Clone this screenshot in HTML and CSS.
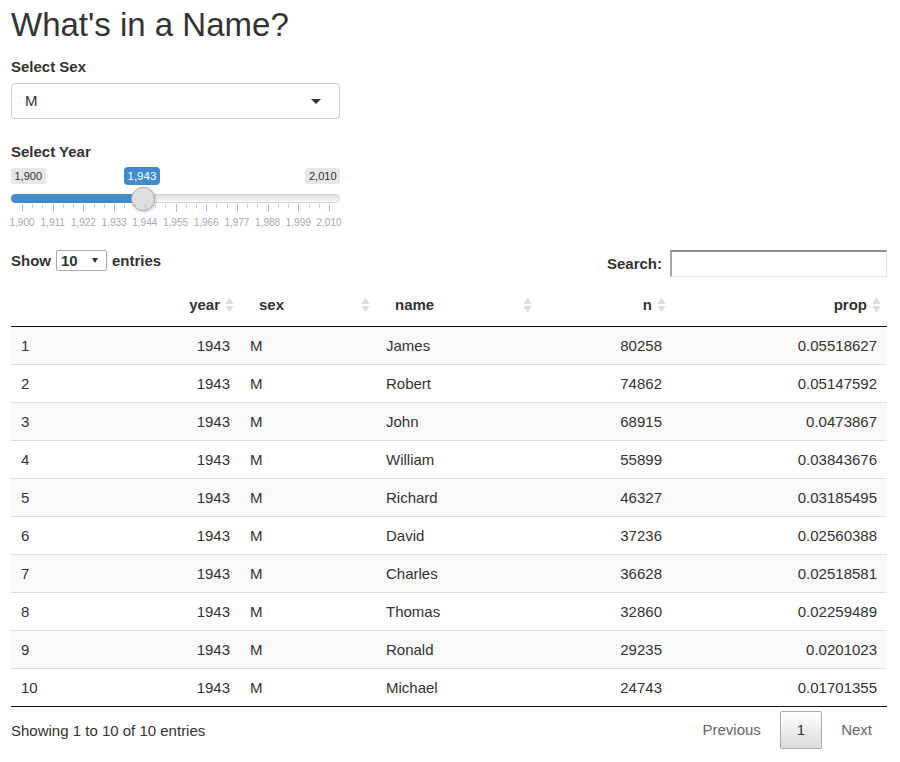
FILE: index.html
```html
<!DOCTYPE html>
<html>
<head>
<meta charset="utf-8">
<title>What's in a Name?</title>
<link rel="stylesheet" href="styles.css">
</head>
<body>
<div class="page">
  <h2 class="title">What's in a Name?</h2>

  <div class="field">
    <label class="ctl-label">Select Sex</label>
    <div class="select-box"><span class="select-value">M</span><span class="caret"></span></div>
  </div>

  <div class="field field-year">
    <label class="ctl-label label-year">Select Year</label>
    <div class="irs">
      <span class="irs-min">1,900</span>
      <span class="irs-max">2,010</span>
      <span class="irs-line"></span>
      <span class="irs-bar"></span>
      <span class="irs-from">1,943</span>
      <span class="irs-handle"></span>
      <div class="irs-grid">
        <span class="tick" style="left:0%"></span>
        <span class="tick small" style="left:3.333%"></span>
        <span class="tick small" style="left:6.667%"></span>
        <span class="tick" style="left:10%"></span>
        <span class="tick small" style="left:13.333%"></span>
        <span class="tick small" style="left:16.667%"></span>
        <span class="tick" style="left:20%"></span>
        <span class="tick small" style="left:23.333%"></span>
        <span class="tick small" style="left:26.667%"></span>
        <span class="tick" style="left:30%"></span>
        <span class="tick small" style="left:33.333%"></span>
        <span class="tick small" style="left:36.667%"></span>
        <span class="tick" style="left:40%"></span>
        <span class="tick small" style="left:43.333%"></span>
        <span class="tick small" style="left:46.667%"></span>
        <span class="tick" style="left:50%"></span>
        <span class="tick small" style="left:53.333%"></span>
        <span class="tick small" style="left:56.667%"></span>
        <span class="tick" style="left:60%"></span>
        <span class="tick small" style="left:63.333%"></span>
        <span class="tick small" style="left:66.667%"></span>
        <span class="tick" style="left:70%"></span>
        <span class="tick small" style="left:73.333%"></span>
        <span class="tick small" style="left:76.667%"></span>
        <span class="tick" style="left:80%"></span>
        <span class="tick small" style="left:83.333%"></span>
        <span class="tick small" style="left:86.667%"></span>
        <span class="tick" style="left:90%"></span>
        <span class="tick small" style="left:93.333%"></span>
        <span class="tick small" style="left:96.667%"></span>
        <span class="tick" style="left:100%"></span>
        <span class="grid-text" style="left:0%">1,900</span>
        <span class="grid-text" style="left:10%">1,911</span>
        <span class="grid-text" style="left:20%">1,922</span>
        <span class="grid-text" style="left:30%">1,933</span>
        <span class="grid-text" style="left:40%">1,944</span>
        <span class="grid-text" style="left:50%">1,955</span>
        <span class="grid-text" style="left:60%">1,966</span>
        <span class="grid-text" style="left:70%">1,977</span>
        <span class="grid-text" style="left:80%">1,988</span>
        <span class="grid-text" style="left:90%">1,999</span>
        <span class="grid-text" style="left:100%">2,010</span>
      </div>
    </div>
  </div>

  <div class="dt-top">
    <div class="dt-length">
      <span>Show</span>
      <span class="len-select"><span>10</span><span class="len-arrow"></span></span>
      <span>entries</span>
    </div>
    <div class="dt-search">
      <span>Search:</span>
      <input class="search-input" type="search" aria-label="Search">
    </div>
  </div>

  <table class="dt">
    <colgroup>
      <col class="c-idx"><col class="c-year"><col class="c-sex"><col class="c-name"><col class="c-n"><col class="c-prop">
    </colgroup>
    <thead>
      <tr>
        <th class="left"></th>
        <th class="right sort">year<svg class="sort-icon" viewBox="0 0 9 16" width="9" height="16"><polygon points="4.5,0.5 8.5,7 0.5,7"/><polygon points="0.5,9 8.5,9 4.5,15.5"/></svg></th>
        <th class="left sort">sex<svg class="sort-icon" viewBox="0 0 9 16" width="9" height="16"><polygon points="4.5,0.5 8.5,7 0.5,7"/><polygon points="0.5,9 8.5,9 4.5,15.5"/></svg></th>
        <th class="left sort">name<svg class="sort-icon" viewBox="0 0 9 16" width="9" height="16"><polygon points="4.5,0.5 8.5,7 0.5,7"/><polygon points="0.5,9 8.5,9 4.5,15.5"/></svg></th>
        <th class="right sort">n<svg class="sort-icon" viewBox="0 0 9 16" width="9" height="16"><polygon points="4.5,0.5 8.5,7 0.5,7"/><polygon points="0.5,9 8.5,9 4.5,15.5"/></svg></th>
        <th class="right sort">prop<svg class="sort-icon" viewBox="0 0 9 16" width="9" height="16"><polygon points="4.5,0.5 8.5,7 0.5,7"/><polygon points="0.5,9 8.5,9 4.5,15.5"/></svg></th>
      </tr>
    </thead>
    <tbody>
      <tr><td>1</td><td class="right">1943</td><td>M</td><td>James</td><td class="right">80258</td><td class="right">0.05518627</td></tr>
      <tr><td>2</td><td class="right">1943</td><td>M</td><td>Robert</td><td class="right">74862</td><td class="right">0.05147592</td></tr>
      <tr><td>3</td><td class="right">1943</td><td>M</td><td>John</td><td class="right">68915</td><td class="right">0.0473867</td></tr>
      <tr><td>4</td><td class="right">1943</td><td>M</td><td>William</td><td class="right">55899</td><td class="right">0.03843676</td></tr>
      <tr><td>5</td><td class="right">1943</td><td>M</td><td>Richard</td><td class="right">46327</td><td class="right">0.03185495</td></tr>
      <tr><td>6</td><td class="right">1943</td><td>M</td><td>David</td><td class="right">37236</td><td class="right">0.02560388</td></tr>
      <tr><td>7</td><td class="right">1943</td><td>M</td><td>Charles</td><td class="right">36628</td><td class="right">0.02518581</td></tr>
      <tr><td>8</td><td class="right">1943</td><td>M</td><td>Thomas</td><td class="right">32860</td><td class="right">0.02259489</td></tr>
      <tr><td>9</td><td class="right">1943</td><td>M</td><td>Ronald</td><td class="right">29235</td><td class="right">0.0201023</td></tr>
      <tr><td>10</td><td class="right">1943</td><td>M</td><td>Michael</td><td class="right">24743</td><td class="right">0.01701355</td></tr>
    </tbody>
  </table>

  <div class="dt-bottom">
    <div class="dt-info">Showing 1 to 10 of 10 entries</div>
    <div class="pagination">
      <span class="pg-btn disabled">Previous</span>
      <span class="pg-btn current">1</span>
      <span class="pg-btn disabled">Next</span>
    </div>
  </div>
</div>
</body>
</html>
```

FILE: styles.css
```css
html, body {
  margin: 0;
  padding: 0;
  background: #fff;
}
body {
  font-family: "Liberation Sans", Arial, Helvetica, sans-serif;
  font-size: 15px;
  line-height: 20px;
  color: #333;
}
.page {
  width: 876px;
  padding: 0 13px 0 11px;
}
.title {
  margin: 5px 0 0;
  font-size: 33px;
  font-weight: 400;
  line-height: 40px;
  color: #333;
}
.ctl-label {
  display: block;
  font-weight: 700;
  line-height: 20px;
  margin-top: 12px;
}
.label-year {
  margin-top: 23px;
}
.select-box {
  margin-top: 6px;
  width: 329px;
  height: 36px;
  box-sizing: border-box;
  border: 1px solid #ccc;
  border-radius: 4px;
  display: flex;
  align-items: center;
  justify-content: space-between;
  padding: 0 18px 0 13px;
  background: #fff;
}
.select-value {
  color: #333;
}
.caret {
  width: 0;
  height: 0;
  border-left: 5.5px solid transparent;
  border-right: 5.5px solid transparent;
  border-top: 5.5px solid #333;
  margin-top: 1px;
}

/* slider */
.irs {
  position: relative;
  width: 329px;
  height: 70px;
}
.irs-min, .irs-max {
  position: absolute;
  top: 6px;
  height: 16px;
  line-height: 16px;
  padding: 0 3.5px;
  font-size: 11px;
  background: #e6e6e6;
  border-radius: 3px;
  color: #333;
}
.irs-min { left: 0; }
.irs-max { right: 0; }
.irs-line {
  position: absolute;
  left: 0;
  right: 0;
  top: 32px;
  height: 9px;
  box-sizing: border-box;
  border: 1px solid #d4d4d4;
  border-radius: 16px;
  background: linear-gradient(to bottom, #e2e2e2, #f8f8f8);
}
.irs-bar {
  position: absolute;
  left: 0;
  width: 132px;
  top: 32px;
  height: 9px;
  background: #428bca;
  border-radius: 16px 0 0 16px;
}
.irs-from {
  position: absolute;
  left: 113px;
  top: 5px;
  height: 18px;
  line-height: 18px;
  padding: 0 3.5px;
  font-size: 11.5px;
  background: #428bca;
  color: #fff;
  border-radius: 4px;
}
.irs-handle {
  position: absolute;
  left: 120px;
  top: 25px;
  width: 24px;
  height: 24px;
  box-sizing: border-box;
  border-radius: 50%;
  border: 1px solid #ababab;
  background: #dedede;
  box-shadow: 1px 1px 3px rgba(0, 0, 0, 0.2);
}
.irs-grid {
  position: absolute;
  left: 11px;
  width: 307px;
  top: 42px;
  height: 28px;
}
.tick {
  position: absolute;
  top: 0;
  width: 1px;
  height: 8px;
  background: #a8c7e5;
}
.tick.small {
  height: 4px;
  background: #c6ccd4;
}
.grid-text {
  position: absolute;
  top: 13px;
  font-size: 10px;
  line-height: 12px;
  color: #a3a9b3;
  transform: translateX(-50%);
  white-space: nowrap;
}

/* datatable top */
.dt-top {
  display: flex;
  justify-content: space-between;
  align-items: flex-start;
}
.dt-length {
  margin-top: 18px;
  display: flex;
  align-items: center;
  gap: 5px;
  font-weight: 700;
  height: 21px;
}
.len-select {
  box-sizing: border-box;
  width: 51px;
  height: 21px;
  border: 1px solid #aaa;
  border-radius: 2px;
  display: flex;
  align-items: center;
  justify-content: space-between;
  padding: 0 8px 0 4px;
  background: #fff;
  font-weight: 700;
}
.len-arrow {
  width: 0;
  height: 0;
  border-left: 3px solid transparent;
  border-right: 3px solid transparent;
  border-top: 5px solid #333;
}
.dt-search {
  margin-top: 18px;
  display: flex;
  align-items: center;
  gap: 8px;
  font-weight: 700;
}
.search-input {
  box-sizing: border-box;
  width: 217px;
  height: 27px;
  margin: 0;
  padding: 0 4px;
  border-style: solid;
  border-width: 2px 1px 1px 2px;
  border-color: #8f8f8f #e3e3e3 #e3e3e3 #a5a5a5;
  background: #fff;
  font: inherit;
  outline: none;
}

/* table */
.dt {
  margin-top: 9px;
  width: 876px;
  border-collapse: separate;
  border-spacing: 0;
  table-layout: fixed;
}
.c-idx { width: 120px; }
.c-year { width: 109px; }
.c-sex { width: 136px; }
.c-name { width: 162px; }
.c-n { width: 134px; }
.c-prop { width: 215px; }
.dt th {
  position: relative;
  box-sizing: border-box;
  height: 41px;
  padding: 0 20px 2px 19px;
  font-weight: 700;
  border-bottom: 1px solid #111;
  vertical-align: middle;
  white-space: nowrap;
}
.dt th.left { text-align: left; }
.dt th.right { text-align: right; }
.sort-icon {
  position: absolute;
  right: 6px;
  top: 50%;
  margin-top: -9px;
  fill: #dddddd;
}
.dt td {
  box-sizing: border-box;
  height: 38px;
  padding: 0 10px;
  border-bottom: 1px solid #ddd;
  vertical-align: middle;
  text-align: left;
  white-space: nowrap;
}
.dt td.right { text-align: right; }
.dt tbody tr:nth-child(odd) td { background: #f9f9f9; }
.dt tbody tr:last-child td { border-bottom-color: #111; }

/* bottom */
.dt-bottom {
  margin-top: 4px;
  display: flex;
  justify-content: space-between;
  align-items: center;
}
.dt-info {
  padding-top: 1px;
}
.pagination {
  display: flex;
  align-items: center;
  margin-right: -2px;
}
.pg-btn {
  box-sizing: border-box;
  height: 38px;
  line-height: 36px;
  padding: 0 16px;
  margin-left: 2px;
  border: 1px solid transparent;
  border-radius: 2px;
  color: #666;
}
.pg-btn.current {
  color: #333;
  border-color: #aaa;
  background: linear-gradient(to bottom, #fff 0%, #dcdcdc 100%);
}
```
